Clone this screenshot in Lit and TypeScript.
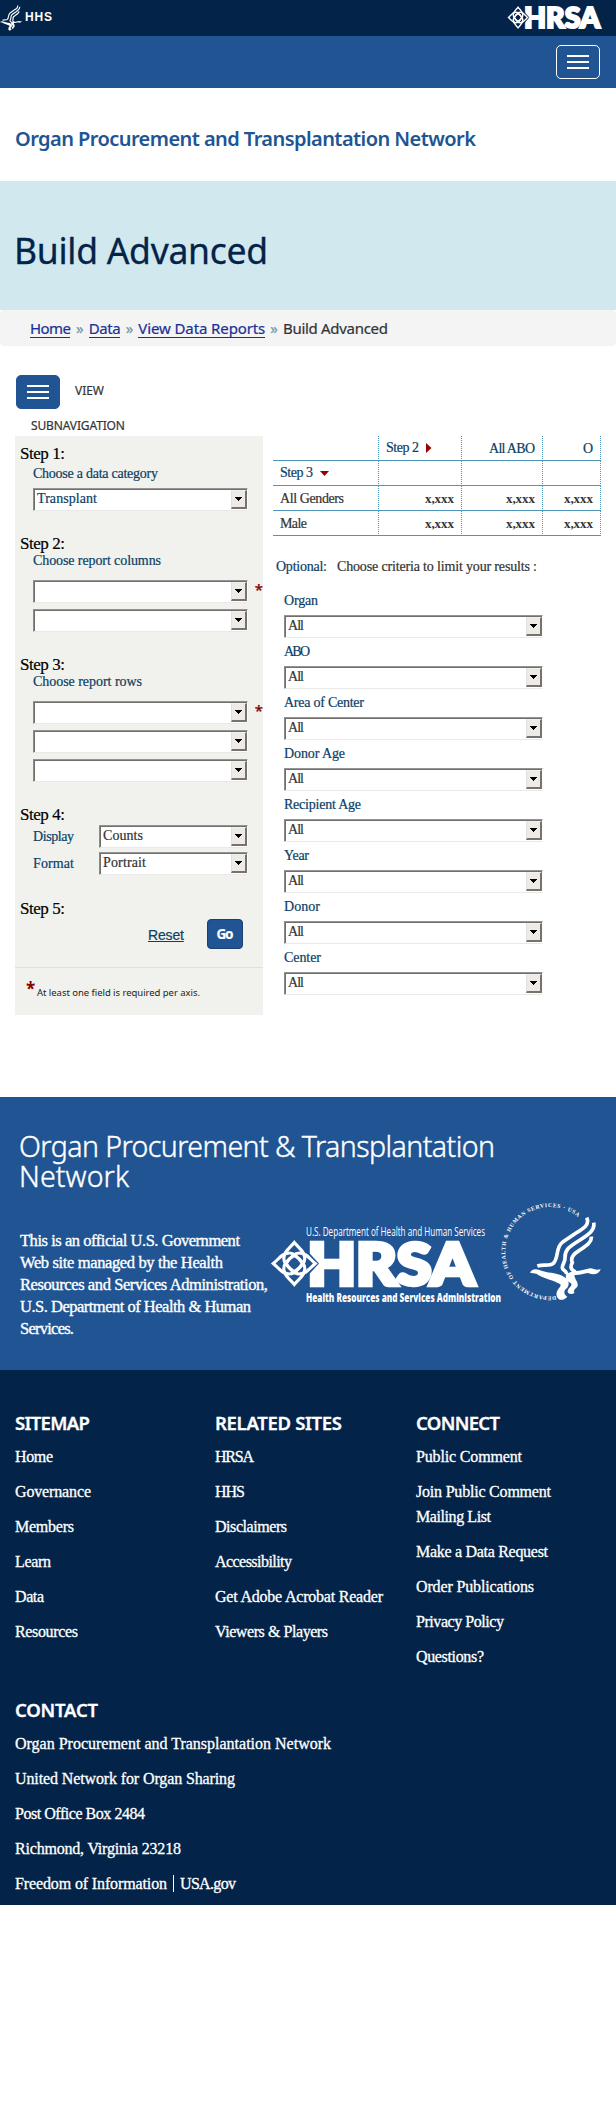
import { LitElement, html, css, svg, nothing } from "lit";
import { customElement, property } from "lit/decorators.js";

/** One line of text whose tracking is adjusted so that it spans a given width. */
@customElement("fit-text")
class FitText extends LitElement {
  @property() text = "";
  @property({ type: Number }) w = 0;
  static styles = css`
    :host { display: inline-block; white-space: pre; }
  `;
  updated() {
    this.style.letterSpacing = "0px";
    const natural = this.getBoundingClientRect().width;
    const gaps = Math.max(1, this.text.length - 1);
    if (this.w && natural) {
      const space = (this.w - natural) / gaps;
      this.style.letterSpacing = `${space.toFixed(3)}px`;
      this.style.marginRight = `${(-space).toFixed(3)}px`;
    }
  }
  render() {
    return html`${this.text}`;
  }
}

const t = (text: string, w: number, cls = "") =>
  html`<fit-text class=${cls} .text=${text} .w=${w}></fit-text>`;

@customElement("form-select")
class FormSelect extends LitElement {
  @property() value = "";
  @property({ type: Number }) w = 0;
  static styles = css`
    :host { display: block; }
    .outer {
      box-sizing: border-box; height: 23px; display: flex; background: #fff;
      border-style: solid; border-width: 1px;
      border-color: #949494 #fbfbfa #e9e9e5 #8b8b8b;
    }
    .inner {
      flex: 1; display: flex; justify-content: space-between; overflow: hidden;
      border-style: solid; border-width: 1px 0 0 1px; border-color: #6f6f6b;
    }
    .value { font-size: 14px; line-height: 18px; padding-left: 2px; height: 18px; }
    .drop {
      box-sizing: border-box; width: 16px; height: 19px; background: #eeebe7;
      border-style: solid; border-width: 1px 2px 2px 1px; border-color: #f3f1ee #76736f #76736f #e3e0dc;
      display: flex; align-items: center; justify-content: center;
    }
  `;
  render() {
    return html`<div class="outer"><div class="inner">
      <div class="value">${this.value ? t(this.value, this.w) : nothing}</div>
      <div class="drop"><svg width="7" height="4" shape-rendering="crispEdges"><path d="M0 0H7L3.5 4Z"/></svg></div>
    </div></div>`;
  }
}

const petal = "M0-21C-5-15-10.500-12-10.500-5C-10.500 0-5 5 0 8C5 5 10.500 0 10.500-5C10.500-12 5-15 0-21Z";

const diamond = svg`<g fill="none" stroke="#fff" stroke-width="3.100">
  <path d=${petal}/><path d=${petal} transform="rotate(90)"/>
  <path d=${petal} transform="rotate(180)"/><path d=${petal} transform="rotate(270)"/></g>`;

const hrsaMark = (bg: string) => svg`
  <text x="37.500" y="61.800" font-family="Lato, sans-serif" font-weight="900" font-size="57"
    stroke="#fff" stroke-width="4.400" fill="#fff" textLength="167" lengthAdjust="spacingAndGlyphs">HRSA</text>
  <g transform="translate(24.300 40.500)">
    <path d="M10-13L22 0L10 13Z" fill=${bg} stroke=${bg} stroke-width="4"/>${diamond}
  </g>`;

const eagle = svg`<g fill="none" stroke="#fff" stroke-width="11">
  <path d="M980 84C990 104 972 116 948 130L907 158C886 174 897 204 880 221C868 231 850 223 832 229"/>
  <path d="M1001 99C1006 121 986 134 960 151C926 172 914 180 915 206C915 222 903 226 908 238C914 244 921 246 919 254"/>
  <path d="M994 141C996 159 976 170 957 183C934 197 932 208 937 219C930 231 932 241 947 247"/></g>
  <g fill="#fff">
  <path d="M810 249C815 238 826 237 838 241C862 251 886 248 908 259C925 268 931 280 922 294C908 304 912 315 922 321C912 334 893 334 890 318C886 300 906 292 901 284C884 271 850 268 829 252Z"/>
  <path d="M919 252L942 243C962 246 975 238 990 236C1002 237 1010 243 1022 238C1017 254 1000 258 985 250C970 252 957 257 944 256C941 267 958 277 952 291C941 300 939 306 944 309C936 316 921 314 923 303C928 291 938 288 933 281C920 274 914 266 919 252Z"/></g>`;

@customElement("app-root")
class AppRoot extends LitElement {
  static styles = css`
    :host { display: block; background: #fff; color: #333; font-family: "Liberation Serif", serif; }
    * { box-sizing: border-box; }
    svg { display: block; flex: none; overflow: visible; }
    .sans { font-family: "Noto Sans", sans-serif; }
    .top { height: 36px; background: #032448; display: flex; justify-content: space-between; padding: 5px 14px 0 0; }
    .hhs { display: flex; color: #fff; gap: 3px; font: bold 12px/16px "Liberation Sans", sans-serif; }
    .hhs fit-text { margin-top: 4px; }
    .nav { height: 52px; background: #205493; display: flex; justify-content: flex-end; padding: 9px 16px 0 0; }
    .burger {
      width: 44px; height: 34px; border: 1px solid #fff; border-radius: 5px; background: #205493;
      display: flex; flex-direction: column; align-items: center; justify-content: center; gap: 4px;
    }
    .burger i { width: 22px; height: 2px; background: #fff; }
    .site { height: 93px; padding: 39px 15px 0; font-size: 20px; line-height: 24px; font-weight: 600; color: #205493; }
    .banner { height: 129px; background: #d1e8ef; padding: 49px 14px 0; font-size: 35.5px; line-height: 40px; color: #032448; -webkit-text-stroke: .3px; }
    .crumbs { height: 36px; background: #f4f4f4; border-radius: 4px; padding: 8px 30px 0; display: flex; gap: 5px; font-size: 15px; line-height: 20px; -webkit-text-stroke: .2px; }
    .crumbs .link { color: #1b3094; height: 20px; border-bottom: 1px solid #1b3094; line-height: 20px; }
    .crumbs .sep { color: #6f97a5; }
    .sub { padding: 29px 0 0 16px; font-size: 12px; line-height: 16px; -webkit-text-stroke: .2px; }
    .sub .row { display: flex; align-items: center; gap: 15px; height: 34px; }
    .sub .row fit-text { margin-bottom: 2px; }
    .sub .burger { border-color: #205493; }
    .sub .second { margin: 9px 0 2px 15px; height: 16px; }
    .builder { display: flex; padding: 0 15px 82px; gap: 10px; align-items: flex-start; }
    .panel { width: 248px; height: 579px; background: #f1f2ed; padding-top: 7px; font-size: 14px; line-height: 18px; }
    .panel, .crit, .grid { -webkit-text-stroke: .2px; }
    .step { height: 20px; line-height: 21px; font-size: 17px; color: #000; padding-left: 5px; margin-top: 22px; }
    .step.first { margin-top: 0; }
    .step.last { margin-top: 23px; }
    .hint { color: #0a4066; padding-left: 18px; height: 18px; margin: -1px 0 10px; }
    .first + .hint { margin: 2px 0 5px; }
    .line { display: flex; padding-left: 18px; margin-top: 6px; height: 23px; }
    .hint + .line { margin-top: 0; }
    .line form-select { width: 215px; color: #0a4066; }
    .star { color: #8b0000; font: 500 15px/19px "Noto Sans", sans-serif; padding-left: 7px; }
    .pair { display: flex; padding-left: 18px; color: #0a4066; height: 23px; margin-top: 4px; line-height: 23px; }
    .step + .pair { margin-top: 1px; }
    .pair form-select { width: 149px; color: #333; margin-left: auto; margin-right: 15px; line-height: 18px; }
    .actions { display: flex; justify-content: flex-end; gap: 23px; padding-right: 20px; margin-top: 1px; }
    .reset { font: 14px/16px "Liberation Sans", sans-serif; color: #0a4066; text-decoration: underline; margin-top: 8px; }
    .go { width: 36px; height: 30px; border-radius: 4px; border: 1px solid #1b4170; background: #205493; color: #fff; font-weight: 700; font-size: 13.5px; line-height: 28px; text-align: center; }
    .note { border-top: 1px solid #dfe1dc; margin-top: 18px; padding: 15px 0 0 11px; display: flex; gap: 2px; color: #222; font-size: 9.5px; line-height: 16px; -webkit-text-stroke: 0; }
    .note b { color: #8b0000; font-size: 17px; line-height: 12px; width: 9px; }
    .note fit-text { padding-top: 2px; }
    .right { width: 328px; font-size: 14px; line-height: 18px; }
    .grid { display: grid; grid-template-columns: 106px 83px 81px 58px; grid-auto-rows: 25px; }
    .cell { border-bottom: 1px solid #4e97ba; border-right: 1px dotted #4e97ba; padding: 3px 7px 0 7px; display: flex; justify-content: flex-end; }
    .cell.head { color: #0a4066; }
    .cell.left { justify-content: flex-start; }
    .cell.low { padding-top: 4px; }
    .cell.x { font-weight: bold; font-size: 13px; padding-top: 4px; -webkit-text-stroke: 0; }
    .cell svg { margin: 4px 0 0 7px; }
    .cell .down { margin-top: 7px; }
    .crit { padding: 22px 0 0 3px; }
    .opt { display: flex; gap: 10px; height: 18px; margin-bottom: 16px; }
    .blue { color: #0a4066; }
    .field { width: 259px; margin-left: 8px; height: 51px; }
    .field .name { height: 23px; color: #0a4066; }
    .about { height: 273px; background: #205493; color: #fff; padding: 34px 15px 0 19px; }
    .about h2 { margin: 0; font-weight: 300; font-size: 28.5px; line-height: 30px; height: 60px; -webkit-text-stroke: .4px; }
    .about h2 fit-text, .about p fit-text { display: table; }
    .about .row { display: flex; margin-top: 6px; padding-left: 1px; }
    .about p { margin: 33px 0 0; width: 250px; font-size: 16.5px; line-height: 22px; -webkit-text-stroke: .35px; }
    .about .logo { margin-top: 26px; }
    .about .seal { margin-top: 6px; }
    .foot { height: 535px; background: #032448; color: #fff; padding: 41px 15px 0; font-size: 16px; line-height: 25px; -webkit-text-stroke: .3px; }
    .cols { display: grid; grid-template-columns: 200px 201px 1fr; height: 287px; }
    .foot h3 { margin: 0 0 9px; height: 24px; font-size: 18.5px; line-height: 24px; font-weight: 600; }
    .foot .item { margin-bottom: 10px; }
    .foot .item fit-text { display: table; }
    .foot .legal { display: flex; gap: 6px; align-items: center; height: 25px; }
    .foot .legal i { width: 1px; height: 17px; background: #fff; }
    .end { height: 197px; }
  `;

  private line(star = false, value = "", w = 0) {
    return html`<div class="line"><form-select .value=${value} .w=${w}></form-select>${star ? html`<span class="star">*</span>` : nothing}</div>`;
  }

  private column(title: string, w: number, items: [string, number][][]) {
    return html`<div><h3 class="sans">${t(title, w)}</h3>
      ${items.map((lines) => html`<div class="item">${lines.map(([s, n]) => t(s, n))}</div>`)}</div>`;
  }

  render() {
    const burger = html`<div class="burger"><i></i><i></i><i></i></div>`;
    const x = () => html`<div class="cell x">${t("x,xxx", 29)}</div>`;
    const fields: [string, number][] = [
      ["Organ", 34], ["ABO", 26], ["Area of Center", 80], ["Donor Age", 61],
      ["Recipient Age", 77], ["Year", 25], ["Donor", 36], ["Center", 37],
    ];
    return html`
      <header class="top">
        <div class="hhs"><svg width="22" height="26" viewBox="808 80 216 255" preserveAspectRatio="none">${eagle}</svg>
          ${t("HHS", 27)}</div>
        <svg width="95" height="25" viewBox="0 15 209 51" preserveAspectRatio="none">${hrsaMark("#032448")}</svg>
      </header>
      <nav class="nav">${burger}</nav>
      <div class="site sans">${t("Organ Procurement and Transplantation Network", 461)}</div>
      <div class="banner sans">${t("Build Advanced", 254)}</div>
      <div class="crumbs sans">
        ${t("Home", 41, "link")}${t("»", 9, "sep")}${t("Data", 32, "link")}${t("»", 9, "sep")}
        ${t("View Data Reports", 127, "link")}${t("»", 9, "sep")}${t("Build Advanced", 105)}
      </div>
      <div class="sub sans">
        <div class="row">${burger}${t("VIEW", 29)}</div>
        <div class="second">${t("SUBNAVIGATION", 94)}</div>
      </div>
      <main class="builder">
        <section class="panel">
          <div class="step first">${t("Step 1:", 45)}</div>
          <div class="hint">${t("Choose a data category", 125)}</div>
          ${this.line(false, "Transplant", 60)}
          <div class="step">${t("Step 2:", 45)}</div>
          <div class="hint">${t("Choose report columns", 128)}</div>
          ${this.line(true)}${this.line()}
          <div class="step">${t("Step 3:", 45)}</div>
          <div class="hint">${t("Choose report rows", 109)}</div>
          ${this.line(true)}${this.line()}${this.line()}
          <div class="step">${t("Step 4:", 45)}</div>
          <div class="pair">${t("Display", 41)}<form-select .value=${"Counts"} .w=${40}></form-select></div>
          <div class="pair">${t("Format", 41)}<form-select .value=${"Portrait"} .w=${43}></form-select></div>
          <div class="step last">${t("Step 5:", 45)}</div>
          <div class="actions">${t("Reset", 36, "reset")}<div class="go sans">${t("Go", 17)}</div></div>
          <div class="note sans"><b>*</b>${t("At least one field is required per axis.", 163)}</div>
        </section>
        <section class="right">
          <div class="grid">
            <div class="cell left"></div>
            <div class="cell head left">${t("Step 2", 33)}<svg width="6" height="10"><path d="M0 0L5.500 5L0 10Z" fill="#900"/></svg></div>
            <div class="cell head low">${t("All ABO", 46)}</div><div class="cell head low">${t("O", 10)}</div>
            <div class="cell head left">${t("Step 3", 33)}<svg class="down" width="9" height="5"><path d="M0 0H9L4.500 5Z" fill="#900"/></svg></div>
            <div class="cell"></div><div class="cell"></div><div class="cell"></div>
            <div class="cell left low">${t("All Genders", 64)}</div>${x()}${x()}${x()}
            <div class="cell left low">${t("Male", 27)}</div>${x()}${x()}${x()}
          </div>
          <div class="crit">
            <div class="opt"><span class="blue">${t("Optional:", 51)}</span>${t("Choose criteria to limit your results :", 200)}</div>
            ${fields.map(([s, n]) => html`<div class="field"><div class="name">${t(s, n)}</div>
              <form-select .value=${"All"} .w=${16}></form-select></div>`)}
          </div>
        </section>
      </main>
      <section class="about">
        <h2 class="sans">${t("Organ Procurement & Transplantation", 476)}${t("Network", 110)}</h2>
        <div class="row">
          <p>${t("This is an official U.S. Government", 220)}${t("Web site managed by the Health", 203)}
            ${t("Resources and Services Administration,", 248)}${t("U.S. Department of Health & Human", 231)}${t("Services.", 54)}</p>
          <svg class="logo" width="232" height="82" viewBox="0 0 232 82" fill="#fff">
            ${hrsaMark("#205493")}
            <text x="36" y="12.500" font-family="Open Sans, sans-serif" font-size="12.500" textLength="179" lengthAdjust="spacingAndGlyphs">U.S. Department of Health and Human Services</text>
            <text x="36" y="78.700" font-family="Open Sans, sans-serif" font-size="12.500" font-weight="800" textLength="195" lengthAdjust="spacingAndGlyphs">Health Resources and Services Administration</text>
          </svg>
          <svg class="seal" width="99" height="98" viewBox="726 40 297 294" fill="#fff">
            <path id="ring" d="M888 319A134 134 0 1 1 964 91" fill="none"/>
            <text font-family="Liberation Serif, serif" font-size="17" font-weight="bold"><textPath href="#ring" textLength="530">DEPARTMENT OF HEALTH &amp; HUMAN SERVICES · USA</textPath></text>
            ${eagle}
          </svg>
        </div>
      </section>
      <footer class="foot">
        <div class="cols">
          ${this.column("SITEMAP", 75, [[["Home", 38]], [["Governance", 76]], [["Members", 59]], [["Learn", 36]], [["Data", 29]], [["Resources", 63]]])}
          ${this.column("RELATED SITES", 127, [[["HRSA", 39]], [["HHS", 30]], [["Disclaimers", 72]], [["Accessibility", 77]], [["Get Adobe Acrobat Reader", 168]], [["Viewers & Players", 113]]])}
          ${this.column("CONNECT", 84, [[["Public Comment", 106]], [["Join Public Comment", 135], ["Mailing List", 75]], [["Make a Data Request", 132]], [["Order Publications", 118]], [["Privacy Policy", 88]], [["Questions?", 68]]])}
        </div>
        ${this.column("CONTACT", 83, [[["Organ Procurement and Transplantation Network", 316]], [["United Network for Organ Sharing", 220]], [["Post Office Box 2484", 130]], [["Richmond, Virginia 23218", 166]]])}
        <div class="legal">${t("Freedom of Information", 152)}<i></i>${t("USA.gov", 56)}</div>
      </footer>
      <div class="end"></div>
    `;
  }
}
